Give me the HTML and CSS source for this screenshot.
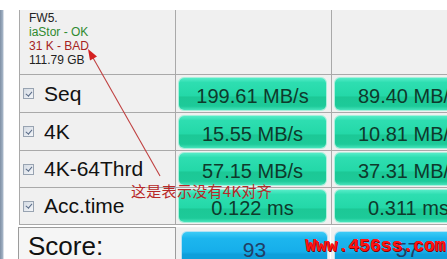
FILE: index.html
```html
<!DOCTYPE html>
<html lang="zh">
<head>
<meta charset="utf-8">
<title>AS SSD Benchmark</title>
<link rel="stylesheet" href="styles.css">
</head>
<body>
<div class="page">
  <div class="frame"></div>
  <div class="gutter"></div>
  <div class="main">
    <div class="grid">
      <div class="cell head">
        <div class="info">FW5.</div>
        <div class="info ok">iaStor - OK</div>
        <div class="info bad">31 K - BAD</div>
        <div class="info">111.79 GB</div>
      </div>
      <div class="cell"></div>
      <div class="cell"></div>

      <div class="cell label"><span class="check"></span><span>Seq</span></div>
      <div class="cell val"><div class="btn">199.61 MB/s</div></div>
      <div class="cell val"><div class="btn">89.40 MB/s</div></div>

      <div class="cell label"><span class="check"></span><span>4K</span></div>
      <div class="cell val"><div class="btn">15.55 MB/s</div></div>
      <div class="cell val"><div class="btn">10.81 MB/s</div></div>

      <div class="cell label"><span class="check"></span><span>4K-64Thrd</span></div>
      <div class="cell val"><div class="btn">57.15 MB/s</div></div>
      <div class="cell val"><div class="btn">37.31 MB/s</div></div>

      <div class="cell label"><span class="check"></span><span>Acc.time</span></div>
      <div class="cell val"><div class="btn">0.122 ms</div></div>
      <div class="cell val"><div class="btn">0.311 ms</div></div>
    </div>
    <div class="score-row">
      <div class="score-box">Score:</div>
      <div class="score-cell"><div class="btn blue">93</div></div>
      <div class="score-cell last"><div class="btn blue">57</div></div>
    </div>
  </div>

  <svg class="arrow" width="447" height="259" viewBox="0 0 447 259">
    <line x1="160" y1="176" x2="92" y2="56" stroke="#c04040" stroke-width="1.1"/>
    <polygon points="88,49 97,56.6 90,60.6" fill="#d42020"/>
  </svg>
  <div class="note">这是表示没有4K对齐</div>
  <div class="watermark">Www.456ss.com</div>
</div>
</body>
</html>
```

FILE: styles.css
```css
html, body {
  margin: 0;
  padding: 0;
  background: #ffffff;
}

.page {
  position: relative;
  width: 447px;
  height: 259px;
  box-sizing: border-box;
  padding-top: 10px;
  display: flex;
  overflow: hidden;
  font-family: "Liberation Sans", Arial, sans-serif;
}

.frame {
  flex: none;
  width: 3px;
  background: linear-gradient(to right, #7e8fa4, #a6b6c8);
  border-right: 1px solid #d8dee6;
}

.gutter {
  flex: none;
  width: 15px;
  background: #ffffff;
}

.main {
  flex: none;
  width: 480px;
  display: flex;
  flex-direction: column;
  background: #ffffff;
}

.grid {
  display: grid;
  grid-template-columns: 155px 155px 155px;
  grid-template-rows: 64px 37px 37px 36px 36px;
  gap: 1px;
  padding: 0 0 1px 1px;
  background: #a9a9a9;
  width: max-content;
}

.cell {
  background: #f0f0f0;
}

.head {
  padding: 1px 0 0 9px;
}

.info {
  font-size: 12px;
  line-height: 14px;
  color: #222222;
}

.info.ok {
  color: #2f8a2f;
}

.info.bad {
  color: #a52222;
}

.label {
  display: flex;
  align-items: center;
  padding-left: 3px;
  font-size: 21px;
  color: #111111;
}

.check {
  flex: none;
  width: 9px;
  height: 9px;
  margin-right: 10px;
  border: 1px solid #98a3b1;
  background: linear-gradient(135deg, #d3dae3, #f4f6f9);
  position: relative;
}

.check::after {
  content: "";
  position: absolute;
  left: 2.5px;
  top: 0.5px;
  width: 2.5px;
  height: 5px;
  border: solid #5a6c88;
  border-width: 0 1.5px 1.5px 0;
  transform: rotate(40deg);
}

.val {
  display: flex;
  align-items: center;
  padding: 0 5px 0 3px;
}

.btn {
  box-sizing: border-box;
  width: 147px;
  height: 32px;
  padding-top: 3px;
  line-height: 30px;
  border-radius: 5px;
  text-align: center;
  font-size: 20px;
  color: #0e3a2c;
  background: linear-gradient(to bottom,
    #55ecc8 0%, #2edeb1 14%, #24d8a8 55%,
    #1cc896 60%, #1dca99 88%, #46e3bb 100%);
  box-shadow: 0 0 0 1px rgba(120, 240, 205, 0.6);
}

.score-row {
  display: flex;
  margin-top: 2px;
  height: 40px;
  background: #f0f0f0;
}

.score-box {
  flex: none;
  box-sizing: border-box;
  width: 158px;
  margin-left: -1px;
  padding: 3px 0 0 9px;
  border: 1px solid #9c9c9c;
  border-bottom: none;
  background: #f5f5f5;
  font-size: 26px;
  line-height: 30px;
  color: #111111;
}

.score-cell {
  flex: none;
  box-sizing: border-box;
  width: 155px;
  padding: 5px 0 0 6px;
  border-right: 1px solid #ffffff;
}

.score-cell.last {
  padding-left: 4px;
  border-right: none;
}

.btn.blue {
  width: 145px;
  height: 36px;
  padding-top: 0;
  line-height: 36px;
  font-size: 21px;
  color: #213f66;
  background: linear-gradient(to bottom,
    #3ccbf6 0%, #1cb6ee 18%, #16aeea 55%,
    #0e9fdb 62%, #0e9fdb 100%);
  box-shadow: 0 0 0 1px rgba(140, 215, 245, 0.6);
}

.arrow {
  position: absolute;
  left: 0;
  top: 0;
  pointer-events: none;
}

.note {
  position: absolute;
  left: 131px;
  top: 181px;
  font-family: "Noto Sans CJK SC", sans-serif;
  font-size: 15px;
  line-height: 20px;
  letter-spacing: 0.3px;
  color: #b82828;
  white-space: nowrap;
}

.watermark {
  position: absolute;
  left: 305px;
  top: 235px;
  font-family: "Liberation Mono", "Courier New", monospace;
  font-weight: bold;
  font-size: 18px;
  line-height: 22px;
  color: #ff1414;
  text-shadow: 1px 1px 0 #8a0000, 0.5px 0 0 #ff1414;
  white-space: nowrap;
}
```
